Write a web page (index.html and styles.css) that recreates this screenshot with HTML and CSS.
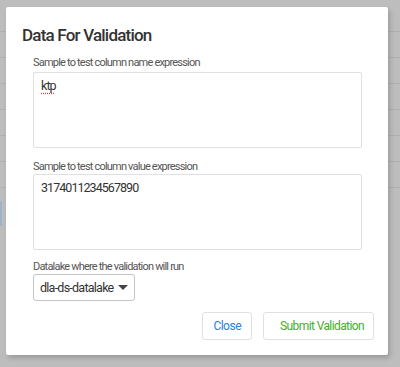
FILE: index.html
```html
<!DOCTYPE html>
<html lang="en">
<head>
    <meta charset="UTF-8">
    <meta name="viewport" content="width=device-width, initial-scale=1.0">
    <title>Data For Validation</title>
    <link rel="stylesheet" href="styles.css">
</head>
<body>
    <div class="page">
        <div class="page-row"></div>
        <div class="page-row"></div>
        <div class="page-row"></div>
        <div class="page-row"></div>
        <div class="page-row"></div>
        <div class="page-row"></div>
        <div class="page-row"></div>
        <div class="page-row selected"></div>
    </div>

    <div class="modal">
        <h1>Data For Validation</h1>

        <div class="form-group">
            <label>Sample to test column name expression</label>
            <div class="textarea"><span class="misspelled">ktp</span></div>
        </div>

        <div class="form-group">
            <label>Sample to test column value expression</label>
            <div class="textarea">3174011234567890</div>
        </div>

        <div class="form-group">
            <label>Datalake where the validation will run</label>
            <div class="select">
                <span>dla-ds-datalake</span>
                <span class="caret"></span>
            </div>
        </div>

        <div class="actions">
            <button class="btn btn-close">Close</button>
            <button class="btn btn-submit">Submit Validation</button>
        </div>
    </div>
</body>
</html>
```

FILE: styles.css
```css
body {
    margin: 0;
    width: 400px;
    height: 367px;
    overflow: hidden;
    background-color: #bdbdbd;
    font-family: Roboto, "Liberation Sans", Arial, sans-serif;
}
.page {
    padding-top: 6px;
}
.page-row {
    height: 25px;
    border-bottom: 1px solid #b0b0b0;
}
.page-row.selected {
    border-bottom: none;
    border-left: 2px solid #9fb3c8;
    margin-top: 13px;
}
.modal {
    position: absolute;
    left: 6px;
    top: 7px;
    width: 382px;
    height: 348px;
    box-sizing: border-box;
    background-color: #fff;
    border-radius: 2px;
    box-shadow: 2px 3px 5px rgba(0,0,0,0.18);
    padding: 17px 26px 0 27px;
}
h1 {
    margin: 0 0 10px -11px;
    font-size: 17px;
    font-weight: 500;
    letter-spacing: -0.8px;
    line-height: 22px;
    color: #333;
}
.form-group {
    margin-bottom: 12px;
}
.form-group:nth-of-type(2) {
    margin-bottom: 10px;
}
label {
    display: block;
    font-size: 11px;
    letter-spacing: -0.8px;
    line-height: 14px;
    color: #555;
    margin-bottom: 0;
}
.form-group:first-of-type label {
    margin-bottom: 2px;
}
.textarea {
    height: 76px;
    box-sizing: border-box;
    border: 1px solid #e0e0e0;
    border-radius: 2px;
    padding: 5px 7px;
    font-size: 12.5px;
    letter-spacing: -0.95px;
    line-height: 16px;
    color: #333;
}
.misspelled {
    text-decoration: underline dotted #e53935;
    text-underline-offset: 3px;
}
.select {
    display: inline-flex;
    align-items: center;
    gap: 5px;
    height: 27px;
    box-sizing: border-box;
    border: 1px solid #c4c4c4;
    border-radius: 3px;
    padding: 0 6px;
    font-size: 12.5px;
    letter-spacing: -0.75px;
    color: #333;
}
.caret {
    width: 0;
    height: 0;
    border-left: 5px solid transparent;
    border-right: 5px solid transparent;
    border-top: 5px solid #444;
}
.actions {
    display: flex;
    justify-content: flex-end;
    gap: 11px;
    margin-top: -1px;
    margin-right: -12px;
}
.btn {
    height: 28px;
    box-sizing: border-box;
    background-color: #fff;
    border: 1px solid #e0e0e0;
    border-radius: 3px;
    font-family: inherit;
    font-size: 12px;
    padding: 0 10px;
    cursor: pointer;
}
.btn-close {
    color: #2a7de1;
    letter-spacing: -0.5px;
}
.btn-submit {
    color: #3fae2a;
    letter-spacing: -0.6px;
    padding: 0 9px 0 16px;
}
```
